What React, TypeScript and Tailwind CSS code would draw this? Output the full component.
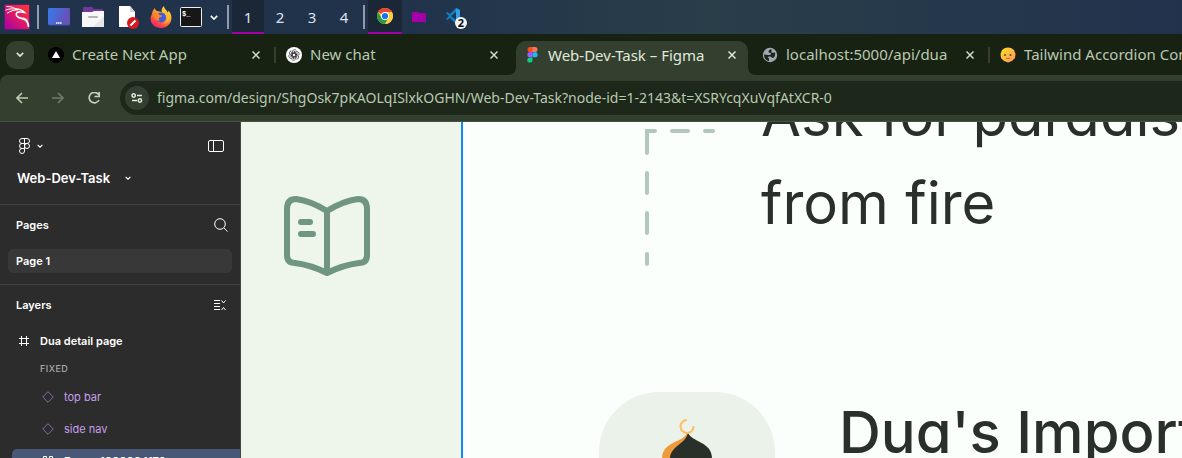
import React from "react";

function KaliIcon() {
  return (
    <svg width="26" height="26" viewBox="0 0 26 26" aria-hidden="true">
      <defs>
        <linearGradient id="kali" x1="1" y1="0" x2="0" y2="1">
          <stop offset="0" stopColor="#ff3b30" />
          <stop offset="0.5" stopColor="#dc1a68" />
          <stop offset="1" stopColor="#a800a8" />
        </linearGradient>
      </defs>
      <rect width="26" height="26" fill="#86108c" opacity="0.6" rx="2" />
      <rect x="1" y="1" width="24" height="24" fill="url(#kali)" />
      <g fill="none" stroke="#fff" strokeLinecap="round">
        <path d="M3 2.500c4 0 7 1 10 3M2 6c4-1.500 7-1.500 11-.5M3.500 9c3-2 6-3 9.500-3" strokeWidth="1" />
        <path d="M12 5c3 0 6 1 8.500 3.500l-4-.5c-3-.5-5 1-4 3.500 1.500 3 6 2.500 9 4.500 2 1.500 3 4 3 6.500" strokeWidth="1.600" />
        <path d="M15 14c4-.5 6 0 8.500 2" strokeWidth="0.900" />
      </g>
    </svg>
  );
}

function DesktopIcon() {
  return (
    <svg width="22" height="18" viewBox="0 0 22 18" aria-hidden="true">
      <defs>
        <linearGradient id="desk" x2="1" y2="0.3">
          <stop stopColor="#367bf0" />
          <stop offset="1" stopColor="#6950b5" />
        </linearGradient>
      </defs>
      <rect width="22" height="17" rx="1" fill="url(#desk)" />
      <path d="M1 17h20" stroke="#315fba" />
      <path d="M8 15h1.500m.5 0h1.500m.5 0h1.500" stroke="#fff" strokeWidth="1.500" />
    </svg>
  );
}

function FilesIcon() {
  return (
    <svg width="22" height="20" viewBox="0 0 22 20" aria-hidden="true">
      <path d="M1 1Q1 0 2 0h8l2 2h8q1 0 1 1v5H1z" fill="#72379b" />
      <path d="M0 5h10l2-1h10v16H0z" fill="#f7f7f7" />
      <path d="M22 9v11H11z" fill="#e6e6e6" />
      <path d="M7 10h8" stroke="#b5b5b5" strokeWidth="2" strokeLinecap="round" />
    </svg>
  );
}

function EditorIcon() {
  return (
    <svg width="21" height="23" viewBox="0 0 21 23" aria-hidden="true">
      <path d="M1 0h11l5 6v15H1z" fill="#fff" />
      <path d="M12 0l5 6h-5z" fill="#d4d4d4" />
      <circle cx="15" cy="17" r="6" fill="#d71920" />
      <path d="M12.500 19.500l5-5" stroke="#fff" strokeWidth="2" />
    </svg>
  );
}

function FirefoxIcon() {
  return (
    <svg width="22" height="22" viewBox="0 0 22 22" aria-hidden="true">
      <defs>
        <linearGradient id="fox" x1="0.8" y1="0" x2="0.2" y2="1">
          <stop stopColor="#fff04a" />
          <stop offset="0.4" stopColor="#ffa32b" />
          <stop offset="0.75" stopColor="#ff4b42" />
          <stop offset="1" stopColor="#e71587" />
        </linearGradient>
      </defs>
      <path d="M14 0c-2 2-3 4-2 6L7 5C5 4 5 3 5 2 3 4 2 6 2 8c-4 7 1 14 9 14 7 0 12-6 10-13-1-3-2-4-3-4v2c-1-3-4-4-4-7z" fill="url(#fox)" />
      <circle cx="11" cy="11.500" r="5" fill="#415be0" />
      <path d="M3 8c3-2 5-1 7 1 2 0 3 1 1 2-2 0-3 2-1 4-4 0-6-3-7-7z" fill="#ff842f" />
      <path d="M15 6c4 4 3 10-2 12 6-1 8-6 5-11z" fill="#ffc23d" />
    </svg>
  );
}

function TerminalIcon() {
  return (
    <svg width="22" height="20" viewBox="0 0 22 20" aria-hidden="true">
      <rect x="0.5" y="0.5" width="21" height="19" rx="1" fill="#171717" stroke="#eee" />
      <text x="2" y="9" fill="#fff" fontFamily="Liberation Mono, monospace" fontWeight="bold" fontSize="7">$_</text>
    </svg>
  );
}

function Chevron({ small = false }: { small?: boolean }) {
  return (
    <svg width={small ? 6 : 8} height={small ? 4 : 5} viewBox="0 0 10 6" fill="none" stroke="currentColor" strokeWidth="2" aria-hidden="true">
      <path d="M1 1l4 4 4-4" />
    </svg>
  );
}

function ChromeIcon() {
  return (
    <svg width="16" height="16" viewBox="0 0 16 16" aria-hidden="true">
      <circle cx="8" cy="8" r="8" fill="#ffcd42" />
      <path d="M8 8L1.100 4A8 8 0 0 1 14.900 4z" fill="#e94335" />
      <path d="M1.100 4A8 8 0 0 0 8 16l3.500-6L8 8 4.500 10z" fill="#279b48" />
      <path d="M8 4h6.900A8 8 0 0 1 8 16l3.500-6z" fill="#ffcd42" />
      <circle cx="8" cy="8" r="4" fill="#fff" />
      <circle cx="8" cy="8" r="3.100" fill="#1a73e8" />
    </svg>
  );
}

function CodeIcon() {
  return (
    <svg width="22" height="22" viewBox="0 0 22 22" aria-hidden="true">
      <path d="M11 0L5 6 2 4 1 5l3 3-3 3 1 1 3-2 6 6zM11 4v8L6 8z" fill="#0f80c4" fillRule="evenodd" />
      <path d="M11 0l4 2v12l-4 2z" fill="#30a0e6" />
      <circle cx="16" cy="15" r="6" fill="#f4f4f4" />
      <text x="16" y="19" textAnchor="middle" fontFamily="Noto Sans, sans-serif" fontWeight="bold" fontSize="11" fill="#111">2</text>
    </svg>
  );
}

function Desktop() {
  const task = "flex h-[34px] w-8 items-center justify-center border-b-2 pt-0.5";
  return (
    <header className="flex h-[34px] shrink-0 items-center bg-linear-to-r from-[#21334b] from-35% via-[#293e49] via-60% to-[#22324d]">
      <button aria-label="Applications" className="ml-1"><KaliIcon /></button>
      <span className="ml-[7px] h-6 w-0.5 bg-[#929ba7]" />
      <button aria-label="Show desktop" className="ml-[9px]"><DesktopIcon /></button>
      <button aria-label="Files" className="ml-3"><FilesIcon /></button>
      <button aria-label="Text editor" className="ml-[14px]"><EditorIcon /></button>
      <button aria-label="Firefox" className="ml-[11px]"><FirefoxIcon /></button>
      <button aria-label="Terminal" className="ml-2"><TerminalIcon /></button>
      <button aria-label="More launchers" className="ml-2 text-white"><Chevron /></button>
      <span className="ml-[9px] h-6 w-0.5 bg-[#929ba7]" />
      <nav aria-label="Workspaces" className="ml-[3px] flex font-['Noto_Sans',sans-serif] text-[15px] text-[#dbe2ee]">
        <button className={task + " border-[#a400a8] bg-[#1b2737]"}>1</button>
        <button className={task + " border-transparent"}>2</button>
        <button className={task + " border-transparent"}>3</button>
        <button className={task + " border-transparent"}>4</button>
      </nav>
      <span className="ml-[3px] h-6 w-0.5 bg-[#929ba7]" />
      <button aria-label="Chrome" className="ml-[3px] flex h-[34px] w-[34px] items-center justify-center border-b-2 border-[#a400a8] bg-[#1b2737]"><ChromeIcon /></button>
      <button aria-label="Purple folder" className="ml-[10px]">
        <svg width="14" height="12" viewBox="0 0 14 12" aria-hidden="true"><path d="M1 1h5l1 1h6q1 0 1 1v8H0V2q0-1 1-1" fill="#a700aa" /></svg>
      </button>
      <button aria-label="Code, 2 windows" className="ml-[19px] pt-1"><CodeIcon /></button>
    </header>
  );
}

function FigmaColor() {
  return (
    <svg width="11" height="16" viewBox="0 0 11 16" aria-hidden="true">
      <path d="M3 0h3v5H3a2.500 2.500 0 0 1 0-5" fill="#f24e1e" />
      <path d="M5.500 0H8a2.500 2.500 0 0 1 0 5H5.500z" fill="#ff7262" />
      <path d="M3 5h2.500v5.300H3A2.600 2.600 0 0 1 3 5" fill="#a259ff" />
      <circle cx="8" cy="7.700" r="2.600" fill="#1abcfe" />
      <path d="M3 10.400h2.500V13A2.600 2.600 0 1 1 3 10.400" fill="#0acf83" />
    </svg>
  );
}

function ChatIcon() {
  return (
    <svg width="16" height="16" viewBox="0 0 16 16" aria-hidden="true">
      <circle cx="8" cy="8" r="8" fill="#fff" />
      <g fill="none" stroke="#303030" strokeWidth="0.7">
        {[0, 60, 120, 180, 240, 300].map((angle) => (
          <path key={angle} transform={`rotate(${angle} 8 8)`} d="M6.200 9V5a2.300 2.300 0 0 1 4.200-1.300M6.200 7L9 5.400l2.800 1.600" />
        ))}
      </g>
    </svg>
  );
}

function NextIcon() {
  return <svg width="16" height="16" viewBox="0 0 16 16" aria-hidden="true"><circle cx="8" cy="8" r="8" fill="#000" /><path d="M8 4l4 7H4z" fill="#fff" /></svg>;
}

function GlobeIcon() {
  return (
    <svg width="16" height="16" viewBox="0 0 16 16" aria-hidden="true">
      <circle cx="8" cy="8" r="7.200" fill="#a4a8b3" />
      <path d="M9.500 2.200C8 2 6.500 3 6.500 4.500 6.500 6 8 5.500 9 6.500c.5 1.500-1 1.500-2.500 1.500L2 7.500C2 11 4 13.700 7 14v-2.500L5.500 10c2-1 4-.5 5 1l1.500-.5c1-1.500 1.500-3.500 1-5-1.200-.5-2 1-3.500 0-.5-1 .5-2 0-3.300" fill="#1b2519" />
    </svg>
  );
}

function FaceIcon() {
  return (
    <svg width="16" height="16" viewBox="0 0 16 16" aria-hidden="true">
      <defs><linearGradient id="face" x2="1" y2="1"><stop stopColor="#ffe11b" /><stop offset="1" stopColor="#ff9266" /></linearGradient></defs>
      <path d="M5 1l3-.5 3 .5 3 2 1.500 4-.5 4-3 3-4 1.500L4 14l-3-3-.5-4L2 3z" fill="url(#face)" />
      <circle cx="5" cy="8" r="1" fill="#594727" /><circle cx="10.500" cy="8" r="1" fill="#594727" />
      <path d="M6 11q2 1 4 0" stroke="#c26a38" fill="none" />
    </svg>
  );
}

function Cross() {
  return <svg width="8" height="8" viewBox="0 0 8 8" stroke="currentColor" strokeWidth="1.500" aria-hidden="true"><path d="M.5.5l7 7m0-7l-7 7" /></svg>;
}

function Tab({ icon, title, divider = false }: { icon: React.ReactNode; title: string; divider?: boolean }) {
  return (
    <div className="relative flex h-7 w-[238px] shrink-0 items-center pr-[14px] pl-3">
      {icon}
      <span className="ml-2 flex-1 truncate">{title}</span>
      <button aria-label={`Close ${title}`} className="text-[#d0dcc9]"><Cross /></button>
      {divider && <span className="absolute -right-0.5 h-4 w-0.5 bg-[#334030]" />}
    </div>
  );
}

function Browser() {
  return (
    <section aria-label="Browser" className="shrink-0 bg-[#182213] font-['Noto_Sans',sans-serif] text-[15px] text-[#b8c9b0]">
      <div className="flex h-[41px] items-center overflow-hidden">
        <button aria-label="Search tabs" className="ml-1.5 flex size-7 shrink-0 items-center justify-center rounded-[10px] bg-[#334030] text-[#e1e8db]"><Chevron /></button>
        <div className="ml-0.5 flex"><Tab icon={<NextIcon />} title="Create Next App" divider /></div>
        <Tab icon={<ChatIcon />} title="New chat" />
        <div className="relative ml-1 flex h-[34px] w-[232px] shrink-0 items-center self-end rounded-t-[10px] bg-[#334030] pr-3 pb-1.5 pl-[11px] text-[#e0e8da]">
          <svg className="absolute bottom-0 -left-2" width="8" height="8" aria-hidden="true"><path d="M8 0v8H0Q8 8 8 0" fill="#334030" /></svg>
          <FigmaColor />
          <span className="ml-[10px] flex-1 whitespace-nowrap">Web-Dev-Task – Figma</span>
          <button aria-label="Close Figma"><Cross /></button>
          <svg className="absolute -right-2 bottom-0" width="8" height="8" aria-hidden="true"><path d="M0 0v8h8Q0 8 0 0" fill="#334030" /></svg>
        </div>
        <div className="ml-0.5"><Tab icon={<GlobeIcon />} title="localhost:5000/api/dua" divider /></div>
        <div className="flex min-w-0 flex-1 items-center overflow-hidden pl-3"><span className="shrink-0"><FaceIcon /></span><span className="ml-2 whitespace-nowrap">Tailwind Accordion Component</span></div>
      </div>
      <div className="flex h-[47px] items-center rounded-tl-lg border-b border-[#465142] bg-[#334030] pl-4">
        <button aria-label="Back" className="text-[#b8ccb0]">
          <svg width="12" height="12" viewBox="0 0 12 12" fill="none" stroke="currentColor" strokeWidth="1.600"><path d="M12 6H1m5-5L1 6l5 5" /></svg>
        </button>
        <button aria-label="Forward" className="ml-6 text-[#6d7b67]">
          <svg width="12" height="12" viewBox="0 0 12 12" fill="none" stroke="currentColor" strokeWidth="1.600"><path d="M0 6h11M6 1l5 5-5 5" /></svg>
        </button>
        <button aria-label="Reload" className="ml-6 text-[#c5d5bd]">
          <svg width="12" height="12" viewBox="0 0 12 12" fill="none" stroke="currentColor" strokeWidth="1.600"><path d="M10.500 2.500A5.200 5.200 0 1 0 11 8M11.200 0v4.500H6.500" /></svg>
        </button>
        <div className="ml-5 flex h-[34px] flex-1 items-center rounded-l-full bg-[#1d271a] pl-[5px]">
          <button aria-label="Site information" className="flex size-6 items-center justify-center rounded-full bg-[#334030] text-[#e2e9dc]">
            <svg width="12" height="10" viewBox="0 0 14 12" fill="none" stroke="currentColor" strokeWidth="1.800"><circle cx="3" cy="3" r="2" /><path d="M7 3h6M1 9h6" /><circle cx="10.500" cy="9" r="2" /></svg>
          </button>
          <input aria-label="Address" className="ml-2 min-w-0 flex-1 bg-transparent text-sm outline-none" defaultValue="figma.com/design/ShgOsk7pKAOLqISlxkOGHN/Web-Dev-Task?node-id=1-2143&t=XSRYcqXuVqfAtXCR-0" />
        </div>
      </div>
    </section>
  );
}

function Layer({ name }: { name: string }) {
  return (
    <button className="flex h-8 w-full items-center pl-[42px] font-normal text-[#c99fec]">
      <svg width="12" height="12" viewBox="0 0 12 12" fill="none" stroke="#8b6aaa" aria-hidden="true"><path d="M6 .7L11.300 6 6 11.300.7 6z" /></svg>
      <span className="ml-[10px]">{name}</span>
    </button>
  );
}

function Sidebar() {
  return (
    <aside className="w-[241px] shrink-0 overflow-hidden border-r border-[#454545] bg-[#2c2c2c] font-[Inter,sans-serif] text-[11px] leading-4 font-semibold text-white">
      <div className="h-[83px] border-b border-[#444] pt-4">
        <div className="flex h-4 items-center pr-4 pl-[19px]">
          <button aria-label="Main menu" className="flex items-center gap-[7px]">
            <svg width="11" height="16" viewBox="0 0 11 16" fill="none" stroke="currentColor" aria-hidden="true"><path d="M5.500.5H3a2.500 2.500 0 0 0 0 5h2.500zm0 0H8a2.500 2.500 0 0 1 0 5H5.500zm0 5H3a2.500 2.500 0 0 0 0 5h2.500z" /><circle cx="8" cy="8" r="2.500" /><path d="M5.500 10.500H3A2.500 2.500 0 1 0 5.500 13z" /></svg>
            <Chevron small />
          </button>
          <button aria-label="Toggle sidebar" className="ml-auto"><svg width="16" height="12" viewBox="0 0 16 12" fill="none" stroke="currentColor"><rect x=".5" y=".5" width="15" height="11" rx="1.500" /><path d="M5.500 0v12" /></svg></button>
        </div>
        <button className="mt-4 flex items-center pl-[17px] text-[13px]">Web-Dev-Task <span className="ml-[15px]"><Chevron small /></span></button>
      </div>
      <div className="h-20 border-b border-[#444] px-2">
        <div className="flex h-10 items-center pr-1 pl-2"><h2>Pages</h2><button aria-label="Find" className="ml-auto"><svg width="14" height="14" viewBox="0 0 14 14" fill="none" stroke="currentColor"><circle cx="6" cy="6" r="5.300" /><path d="M10 10l3.500 3.500" /></svg></button></div>
        <button className="mt-1 h-6 w-full rounded-[5px] bg-[#383838] pl-2 text-left">Page 1</button>
      </div>
      <div className="flex h-10 items-center pr-[14px] pl-4"><h2>Layers</h2><button aria-label="Collapse layers" className="ml-auto"><svg width="12" height="11" viewBox="0 0 12 11" fill="none" stroke="currentColor"><path d="M0 .5h6m-6 3h6m-6 3h6m-6 3h6M7.500.5L9.500 3l2-2.500M7.500 10l2-2.500 2 2.500" /></svg></button></div>
      <button className="flex h-8 w-full items-center pl-[19px]"><svg width="10" height="10" viewBox="0 0 10 10" stroke="currentColor" aria-hidden="true"><path d="M2.500 0v10m5-10v10M0 2.500h10M0 7.500h10" /></svg><span className="ml-[11px]">Dua detail page</span></button>
      <div className="flex h-6 items-center pl-10 text-[9px] font-medium tracking-wider text-[#aaa]">FIXED</div>
      <Layer name="top bar" /><Layer name="side nav" />
      <button className="mt-1 ml-3 flex h-6 w-full items-center rounded-l-[5px] bg-[#4a5878] pl-[31px]"><svg width="10" height="10" viewBox="0 0 10 10" fill="none" stroke="currentColor" aria-hidden="true"><path d="M.5.5h3v3h-3zm6 0h3v3h-3zm-6 6h3v3h-3zm6 0h3v3h-3z" /></svg><span className="ml-[11px]">Frame 1000004173</span></button>
    </aside>
  );
}

function Canvas() {
  return (
    <main className="flex min-w-0 flex-1 overflow-hidden bg-[#fbfffc] text-[#2b2f2b]">
      <div className="w-[222px] shrink-0 border-r-2 border-[#0d8ce9] bg-[#eef5eb] pt-[72px] pl-[43px]">
        <svg width="88" height="84" viewBox="0 0 88 84" fill="none" stroke="#709583" strokeWidth="6" strokeLinejoin="round" strokeLinecap="round" aria-label="Open book">
          <path d="M43 17Q27 7 12 5Q3 5 3 15V61Q3 69 11 69Q27 71 43 79Q59 71 75 69Q83 69 83 61V15Q83 5 74 5Q59 7 43 17zM43 17V79M17 28H26M17 40H29" />
        </svg>
      </div>
      <div className="min-w-0 flex-1 font-[Inter,sans-serif] text-[58px] whitespace-nowrap [font-feature-settings:'cv11']">
        <div className="flex h-[270px] overflow-hidden">
          <svg className="mt-1.5 ml-[181px] shrink-0" width="74" height="142" viewBox="0 0 74 142" fill="none" stroke="#b2c7bd" strokeWidth="4" strokeLinecap="round" aria-hidden="true"><path d="M3 25V3h8M28 3h16M61 3h8M3 45v20M3 85v20M3 126v10" /></svg>
          <p className="-mt-[51px] ml-[43px] leading-[88px]">Ask for paradise, protection<br />from fire</p>
        </div>
        <div className="flex pl-[136px]">
          <div className="flex h-44 w-44 shrink-0 justify-center rounded-[60px] bg-[#ebf2ea] pt-[27px]">
            <svg width="52" height="90" viewBox="0 0 52 90" aria-hidden="true">
              <path d="M26 14C22 24 1 22 1 40v50h40V30z" fill="#ef9b3c" />
              <path d="M27 14C31 23 51 23 51 39v51H9V40C9 27 24 26 27 14" fill="#293029" />
              <path d="M26 1a6.500 6.500 0 1 0 6.500 6" fill="none" stroke="#ffbd5c" strokeWidth="2" />
            </svg>
          </div>
          <h2 className="ml-16 leading-[80px] font-medium">Dua's Importance</h2>
        </div>
      </div>
    </main>
  );
}

export default function App() {
  return <div className="flex h-screen flex-col overflow-hidden"><Desktop /><Browser /><div className="flex min-h-0 flex-1"><Sidebar /><Canvas /></div></div>;
}
